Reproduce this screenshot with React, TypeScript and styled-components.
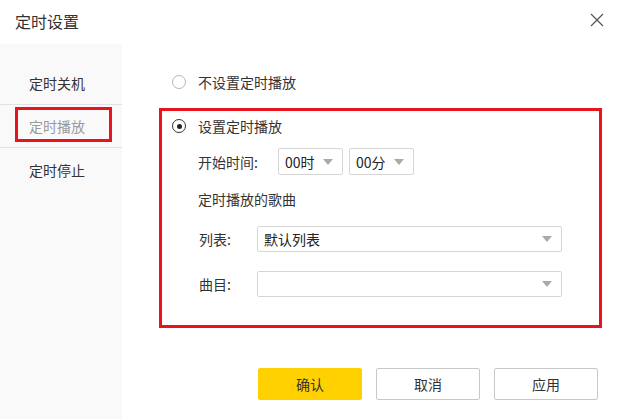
import React, { useState } from 'react';
import styled, { createGlobalStyle } from 'styled-components';

const GlobalStyle = createGlobalStyle`
  html, body {
    margin: 0;
    padding: 0;
    background: #fff;
  }
  body {
    font-family: 'Noto Sans CJK SC', 'Noto Sans', sans-serif;
    color: #333;
    font-size: 14px;
  }
  * { box-sizing: border-box; }
`;

const menuItems = ['定时关机', '定时播放', '定时停止'];
const hours = '00时';
const minutes = '00分';

const App: React.FC = () => {
  const [active] = useState(1);
  const [mode, setMode] = useState<'none' | 'set'>('set');

  return (
    <>
      <GlobalStyle />
      <Dialog>
        <Header>
          <Title>定时设置</Title>
          <CloseButton aria-label="close">
            <svg width="14" height="14" viewBox="0 0 14 14">
              <path d="M1 1 L13 13 M13 1 L1 13" stroke="#555" strokeWidth="1.2" fill="none" />
            </svg>
          </CloseButton>
        </Header>
        <Body>
          <Sidebar>
            {menuItems.map((item, index) => (
              <MenuItem key={item} active={index === active} last={index === menuItems.length - 1}>
                {item}
                {index === active && <Highlight />}
              </MenuItem>
            ))}
          </Sidebar>
          <Main>
            <RadioRow indent={13} onClick={() => setMode('none')}>
              <Radio checked={mode === 'none'} />
              <RadioLabel>不设置定时播放</RadioLabel>
            </RadioRow>
            <MarkedSection>
              <RadioRow indent={10} onClick={() => setMode('set')}>
                <Radio checked={mode === 'set'} />
                <RadioLabel>设置定时播放</RadioLabel>
              </RadioRow>
              <TimeRow>
                <TimeLabel>开始时间:</TimeLabel>
                <Select width={65} height={27}>
                  <SelectText>{hours}</SelectText>
                  <Caret />
                </Select>
                <Select width={65} height={27}>
                  <SelectText>{minutes}</SelectText>
                  <Caret />
                </Select>
              </TimeRow>
              <SongTitle>定时播放的歌曲</SongTitle>
              <FieldRow gap={17}>
                <FieldLabel>列表:</FieldLabel>
                <Select width={305} height={26}>
                  <SelectText>默认列表</SelectText>
                  <Caret />
                </Select>
              </FieldRow>
              <FieldRow gap={19}>
                <FieldLabel>曲目:</FieldLabel>
                <Select width={305} height={26}>
                  <SelectText />
                  <Caret />
                </Select>
              </FieldRow>
            </MarkedSection>
            <Actions>
              <Button primary>确认</Button>
              <Button>取消</Button>
              <Button>应用</Button>
            </Actions>
          </Main>
        </Body>
      </Dialog>
    </>
  );
};

const Dialog = styled.div`
  width: 620px;
  height: 419px;
  display: flex;
  flex-direction: column;
  background: #fff;
  overflow: hidden;
`;

const Header = styled.div`
  height: 44px;
  display: flex;
  align-items: center;
  justify-content: space-between;
  padding: 0 16px 2px 15px;
`;

const Title = styled.div`
  font-size: 16px;
  line-height: 20px;
  color: #333;
`;

const CloseButton = styled.div`
  width: 14px;
  height: 14px;
  display: flex;
  margin-top: -3px;
`;

const Body = styled.div`
  flex: 1;
  display: flex;
`;

const Sidebar = styled.div`
  width: 122px;
  background: #f9f9f9;
  padding-top: 18px;
`;

const MenuItem = styled.div<{ active: boolean; last: boolean }>`
  position: relative;
  height: 43px;
  display: flex;
  align-items: center;
  padding-left: 29px;
  padding-top: ${p => (p.last ? '1px' : '0')};
  font-size: 14px;
  line-height: 20px;
  color: ${p => (p.active ? '#999' : '#333')};
  border-bottom: ${p => (p.last ? 'none' : '1px solid #e2e2e2')};
`;

const Highlight = styled.span`
  position: absolute;
  left: 15px;
  top: 2px;
  width: 97px;
  height: 35px;
  border: 3px solid #e8131c;
`;

const Main = styled.div`
  flex: 1;
  padding: 24px 0 0 37px;
`;

const RadioRow = styled.div<{ indent: number }>`
  height: 28px;
  display: flex;
  align-items: center;
  padding-left: ${p => p.indent}px;
  cursor: pointer;
`;

const Radio = styled.span<{ checked: boolean }>`
  width: 14px;
  height: 14px;
  border-radius: 50%;
  border: 1px solid ${p => (p.checked ? '#333' : '#b5b5b5')};
  display: flex;
  align-items: center;
  justify-content: center;

  &::after {
    content: '';
    width: 5px;
    height: 5px;
    border-radius: 50%;
    background: #222;
    display: ${p => (p.checked ? 'block' : 'none')};
  }
`;

const RadioLabel = styled.span`
  margin-left: 12px;
  font-size: 14px;
  line-height: 20px;
`;

const MarkedSection = styled.div`
  width: 443px;
  height: 220px;
  margin-top: 12px;
  border: 3px solid #e8131c;
  padding-top: 1px;
`;

const TimeRow = styled.div`
  display: flex;
  align-items: center;
  gap: 6px;
  margin: 8px 0 0 36px;
`;

const TimeLabel = styled.span`
  width: 74px;
  font-size: 14px;
  line-height: 20px;
`;

const SongTitle = styled.div`
  margin: 14px 0 0 36px;
  font-size: 14px;
  line-height: 20px;
`;

const FieldRow = styled.div<{ gap: number }>`
  display: flex;
  align-items: center;
  margin: ${p => p.gap}px 0 0 37px;
`;

const FieldLabel = styled.span`
  width: 58px;
  font-size: 14px;
  line-height: 20px;
`;

const Select = styled.div<{ width: number; height: number }>`
  width: ${p => p.width}px;
  height: ${p => p.height}px;
  border: 1px solid #d6d6d6;
  border-radius: 2px;
  background: #fff;
  display: flex;
  align-items: center;
  justify-content: space-between;
  padding: 0 9px 0 6px;
`;

const SelectText = styled.span`
  font-size: 14px;
  line-height: 20px;
  color: #222;
`;

const Caret = styled.span`
  width: 0;
  height: 0;
  border-left: 5px solid transparent;
  border-right: 5px solid transparent;
  border-top: 6px solid #aaa;
`;

const Actions = styled.div`
  display: flex;
  gap: 14px;
  margin: 40px 0 0 99px;
`;

const Button = styled.button<{ primary?: boolean }>`
  width: 104px;
  height: 32px;
  border-radius: 2px;
  border: 1px solid ${p => (p.primary ? '#ffd100' : '#c8c8c8')};
  background: ${p => (p.primary ? '#ffd100' : '#fff')};
  color: #333;
  font-family: 'Noto Sans CJK SC', 'Noto Sans', sans-serif;
  font-size: 14px;
  line-height: 20px;
  padding: 0;
  cursor: pointer;
`;

export default App;
